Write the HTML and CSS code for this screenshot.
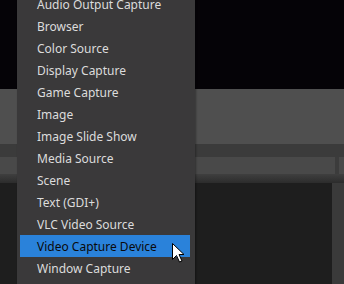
FILE: index.html
```html
<!DOCTYPE html>
<html lang="en">
<head>
    <meta charset="UTF-8">
    <title>Add Source</title>
    <link rel="stylesheet" href="styles.css">
</head>
<body>
    <div class="window">
        <div class="preview"></div>
        <div class="controls"></div>
        <div class="dock-title"></div>
        <div class="dock-header">
            <div class="dock-tab"></div>
            <div class="dock-sep"></div>
        </div>
        <div class="dock-shade"></div>
        <div class="dock-body">
            <div class="dock-list"></div>
            <div class="dock-side"></div>
        </div>

        <ul class="menu">
            <li>Audio Output Capture</li>
            <li>Browser</li>
            <li>Color Source</li>
            <li>Display Capture</li>
            <li>Game Capture</li>
            <li>Image</li>
            <li>Image Slide Show</li>
            <li>Media Source</li>
            <li>Scene</li>
            <li>Text (GDI+)</li>
            <li>VLC Video Source</li>
            <li class="active">Video Capture Device</li>
            <li>Window Capture</li>
        </ul>

        <svg class="cursor" width="13" height="20" viewBox="0 0 13 20">
            <path d="M0.5 0.5 V16.5 L4.5 12.5 L7.5 19 L10 18 L7 11.5 H12 Z" fill="#fff" stroke="#000" stroke-width="1" stroke-linejoin="miter"/>
        </svg>
    </div>
</body>
</html>
```

FILE: styles.css
```css
body {
    margin: 0;
    background: #1e1e1e;
    font-family: "Noto Sans", "Open Sans", sans-serif;
    overflow: hidden;
}
.window {
    position: relative;
    width: 344px;
    height: 284px;
    overflow: hidden;
}
.preview {
    height: 89px;
    background: #050307;
}
.controls {
    height: 55px;
    background: #4f4f4f;
}
.dock-title {
    height: 13px;
    background: #3b3b3b;
}
.dock-header {
    display: flex;
    height: 17px;
    background: #494949;
}
.dock-tab {
    flex: 1;
}
.dock-sep {
    width: 4px;
    margin-right: 5px;
    background: #3c3c3c;
}
.dock-shade {
    height: 9px;
    background: linear-gradient(#3f3f3f, #2c2c2c);
}
.dock-body {
    display: flex;
    height: 101px;
}
.dock-list {
    flex: 1;
    background: #1e1e1e;
}
.dock-side {
    width: 12px;
    background: #3a3a3a;
}
.menu {
    position: absolute;
    left: 17px;
    top: -7px;
    width: 170px;
    margin: 0;
    padding: 0 5px 10px 3px;
    list-style: none;
    background: #3a393a;
    box-shadow: 1px 0 2px rgba(0, 0, 0, 0.35);
}
.menu li {
    box-sizing: border-box;
    height: 22px;
    padding: 2px 0 0 17px;
    line-height: 20px;
    font-size: 12px;
    color: #dcdcdc;
    white-space: nowrap;
}
.menu li.active {
    background: #2a82da;
    color: #0a0a0a;
}
.cursor {
    position: absolute;
    left: 172px;
    top: 243px;
}
```
